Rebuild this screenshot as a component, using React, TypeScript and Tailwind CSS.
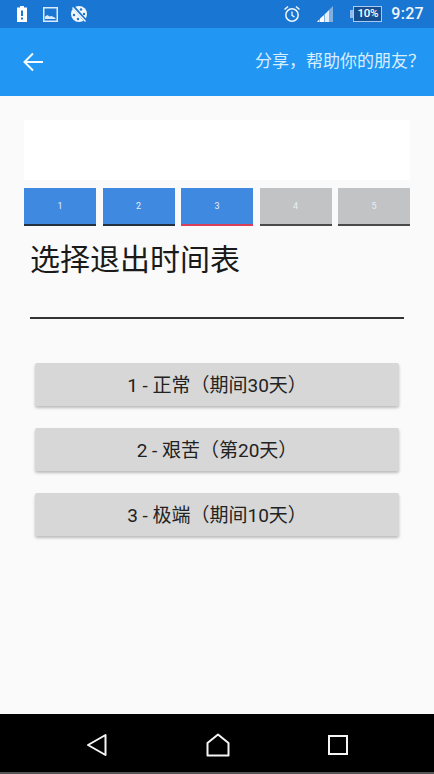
const font = "font-['Roboto','Noto_Sans_CJK_SC',sans-serif]";

function Step({ n, active, current }: { n: number; active: boolean; current?: boolean }) {
  return (
    <div
      className={`flex h-[38px] w-[72px] items-center justify-center border-b-2 pt-[2px] text-[9px] text-[#e8eef6] ${
        active ? "bg-[#3f8ae0]" : "bg-[#c2c3c5]"
      } ${current ? "border-[#d8405a]" : active ? "border-[#22303f]" : "border-[#4a4a4a]"}`}
    >
      {n}
    </div>
  );
}

function Choice({ label }: { label: string }) {
  return (
    <button className="flex h-[43px] w-full items-center justify-center rounded-[2px] bg-[#d7d7d7] pt-[4px] text-[19px] text-[#222] shadow-[0_2px_3px_rgba(0,0,0,0.25)]">
      {label}
    </button>
  );
}

export default function App() {
  return (
    <div className={`flex h-[774px] w-[434px] flex-col overflow-hidden bg-[#fafafa] ${font}`}>
      <div className="flex h-[28px] items-center bg-[#1976d2] pl-4 pr-[10px] text-white">
        <svg width="12" height="16" viewBox="0 0 12 16">
          <path d="M4 0h4v1.5h3V16H1V1.5h3z" fill="#fff" />
          <rect x="5" y="4.5" width="2" height="5.5" fill="#1976d2" />
          <rect x="5" y="11.5" width="2" height="2" fill="#1976d2" />
        </svg>
        <svg className="ml-[15px]" width="15" height="15" viewBox="0 0 15 15">
          <rect x="0.75" y="0.75" width="13.5" height="13.5" fill="none" stroke="#dcebfa" strokeWidth="1.5" />
          <path d="M2 12V9.5l2.5-1.5 2 1.5 2-.5 4 2V12z" fill="#dcebfa" />
        </svg>
        <svg className="ml-[12px]" width="18" height="18" viewBox="0 0 18 18">
          <circle cx="9" cy="9" r="8" fill="#f2f7fd" />
          <circle cx="6" cy="5" r="1.3" fill="#1976d2" />
          <circle cx="11" cy="4.5" r="1.2" fill="#1976d2" />
          <circle cx="14" cy="9" r="1.2" fill="#1976d2" />
          <circle cx="4" cy="10" r="1.2" fill="#1976d2" />
          <circle cx="8" cy="14" r="1.2" fill="#1976d2" />
          <circle cx="12.5" cy="13" r="1.1" fill="#1976d2" />
          <path d="M3 1.5 16 16" stroke="#1976d2" strokeWidth="3.2" />
          <path d="M2.5 2.5 15.5 16.5" stroke="#f2f7fd" strokeWidth="1.4" />
        </svg>
        <div className="ml-auto flex items-center">
          <svg width="18" height="18" viewBox="0 0 18 18" fill="none" stroke="#f2f7fd">
            <circle cx="9" cy="10" r="6.2" strokeWidth="1.5" />
            <path d="M9 6.5V10.3L11.5 12" strokeWidth="1.3" />
            <path d="M1.5 4.5 5 1.5M16.5 4.5 13 1.5" strokeWidth="1.6" />
          </svg>
          <svg className="ml-[14px]" width="20" height="18" viewBox="0 0 20 18">
            <path d="M18 1V17H14V5z" fill="#7fb0e4" />
            <path d="M14 5V17H9.5V9.5z" fill="#e6f0fb" />
            <path d="M9 10V17H5V13.5z" fill="#fff" />
            <path d="M4.5 14V17H2z" fill="#fff" />
          </svg>
          <div className="ml-[15px] h-[8px] w-[3px] bg-[#8fbcec]" />
          <div className="flex h-[16px] w-[29px] items-center justify-center border border-[#a8ccf0] bg-[#164f91] text-[11.5px] font-medium leading-none tracking-[-0.3px] text-white">
            10%
          </div>
          <span className="ml-[9px] text-[16px] font-medium leading-none tracking-[0.3px] text-[#f2f7fd]">9:27</span>
        </div>
      </div>

      <div className="flex h-[68px] items-center justify-between bg-[#2196f3] pl-[22px] pr-[9px]">
        <svg width="22" height="22" viewBox="0 0 22 22" fill="none" stroke="#f4faff" strokeWidth="2">
          <path d="M21 11H3M11 2.5 2.5 11l8.5 8.5" />
        </svg>
        <span className="text-[17px] text-[#d8eeff]">{"分享\uFF0C帮助你的朋友\uFF1F"}</span>
      </div>

      <div className="flex flex-1 flex-col pt-6">
        <div className="mx-6 h-[60px] bg-white" />
        <div className="mx-6 mt-2 flex justify-between">
          <Step n={1} active />
          <Step n={2} active />
          <Step n={3} active current />
          <Step n={4} active={false} />
          <Step n={5} active={false} />
        </div>
        <h1 className="ml-[30px] mt-[13px] text-[30px] font-normal leading-[42px] text-[#1a1a1a]">选择退出时间表</h1>
        <div className="mx-[30px] mt-[36px] h-[1.5px] bg-[#333]" />
        <div className="mx-[35px] mt-[44px] flex flex-col gap-[22px]">
          <Choice label={"1 - 正常\uFF08期间30天\uFF09"} />
          <Choice label={"2 - 艰苦\uFF08第20天\uFF09"} />
          <Choice label={"3 - 极端\uFF08期间10天\uFF09"} />
        </div>
      </div>

      <div className="flex h-[58px] items-center justify-between bg-black px-[86px] pt-[4px]">
        <svg width="22" height="24" viewBox="0 0 22 24" fill="none" stroke="#f5f5f5" strokeWidth="2" strokeLinejoin="round">
          <path d="M19.5 2V22L2 12z" />
        </svg>
        <svg width="24" height="24" viewBox="0 0 24 24" fill="none" stroke="#f5f5f5" strokeWidth="2" strokeLinejoin="round">
          <path d="M1.5 22.5V10L12 1.5 22.5 10V22.5z" />
        </svg>
        <svg width="20" height="20" viewBox="0 0 20 20" fill="none" stroke="#f5f5f5" strokeWidth="2">
          <rect x="1" y="1" width="18" height="18" />
        </svg>
      </div>
      <div className="h-[2px] bg-[#555]" />
    </div>
  );
}
